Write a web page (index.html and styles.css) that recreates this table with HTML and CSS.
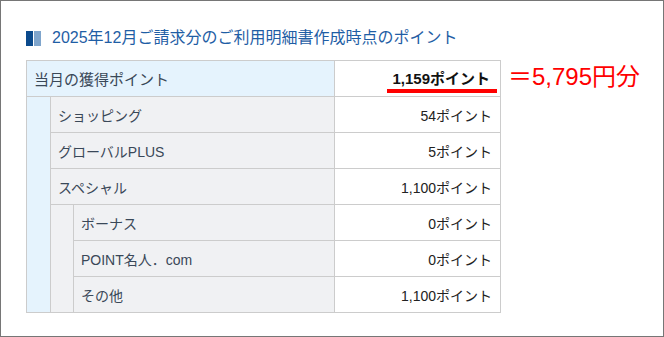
FILE: index.html
```html
<!DOCTYPE html>
<html lang="ja">
<head>
<meta charset="utf-8">
<link rel="stylesheet" href="styles.css">
</head>
<body>
<div class="frame">
  <h2 class="heading"><span class="mark"><span class="mark-dark"></span><span class="mark-light"></span></span>2025年12月ご請求分のご利用明細書作成時点のポイント</h2>
  <div class="content">
    <table class="points">
      <colgroup>
        <col class="c-ind1">
        <col class="c-ind2">
        <col class="c-label">
        <col class="c-value">
      </colgroup>
      <tr>
        <td class="label total-label" colspan="3">当月の獲得ポイント</td>
        <td class="value total-value"><span class="under">1,159ポイント</span></td>
      </tr>
      <tr>
        <td class="indent" rowspan="6"></td>
        <td class="label" colspan="2">ショッピング</td>
        <td class="value">54ポイント</td>
      </tr>
      <tr>
        <td class="label" colspan="2">グローバルPLUS</td>
        <td class="value">5ポイント</td>
      </tr>
      <tr>
        <td class="label" colspan="2">スペシャル</td>
        <td class="value">1,100ポイント</td>
      </tr>
      <tr>
        <td class="indent2" rowspan="3"></td>
        <td class="label">ボーナス</td>
        <td class="value">0ポイント</td>
      </tr>
      <tr>
        <td class="label">POINT名人．com</td>
        <td class="value">0ポイント</td>
      </tr>
      <tr>
        <td class="label">その他</td>
        <td class="value">1,100ポイント</td>
      </tr>
    </table>
    <div class="note">＝5,795円分</div>
  </div>
</div>
</body>
</html>
```
FILE: styles.css
```css
html, body {
  margin: 0;
  padding: 0;
  background: #fff;
}
.frame {
  width: 664px;
  height: 337px;
  box-sizing: border-box;
  border: 1px solid #767676;
  padding: 29px 0 0 25px;
  font-family: "Liberation Sans", "Noto Sans CJK JP", sans-serif;
}
.heading {
  display: flex;
  align-items: center;
  gap: 11px;
  margin: 0 0 14px 0;
  font-size: 16px;
  line-height: 16px;
  font-weight: normal;
  color: #1f5ea5;
}
.mark {
  display: flex;
  gap: 1px;
  height: 15px;
}
.mark-dark {
  width: 7px;
  background: #0b4a8c;
}
.mark-light {
  width: 7px;
  background: #7fa5cc;
}
.content {
  display: flex;
  align-items: flex-start;
}
.points {
  border-collapse: collapse;
  table-layout: fixed;
  width: 475px;
}
.c-ind1 { width: 24px; }
.c-ind2 { width: 23px; }
.c-value { width: 166px; }
.points td {
  border: 1px solid #cccccc;
  height: 35px;
  padding: 0;
  font-size: 14px;
  white-space: nowrap;
}
.label {
  background: #f0f1f3;
  color: #3a4858;
  padding: 0 7px !important;
}
.total-label {
  background: #e5f3fd;
  font-size: 15px !important;
}
.indent {
  background: #e5f3fd;
}
.indent2 {
  background: #f0f1f3;
}
.value {
  background: #fff;
  color: #222;
  text-align: right;
  padding: 0 8px 0 0 !important;
}
.total-value {
  font-weight: bold;
  font-size: 15px !important;
  color: #111;
}
.under {
  display: inline-block;
  line-height: 18px;
  padding: 2px 7px 1px 5px;
  margin-right: -5px;
  border-bottom: 4px solid #f00;
  position: relative;
  top: 2px;
}
.note {
  margin-left: 7px;
  padding-top: 5px;
  font-size: 24px;
  line-height: 24px;
  color: #ff0000;
  white-space: nowrap;
}
```
